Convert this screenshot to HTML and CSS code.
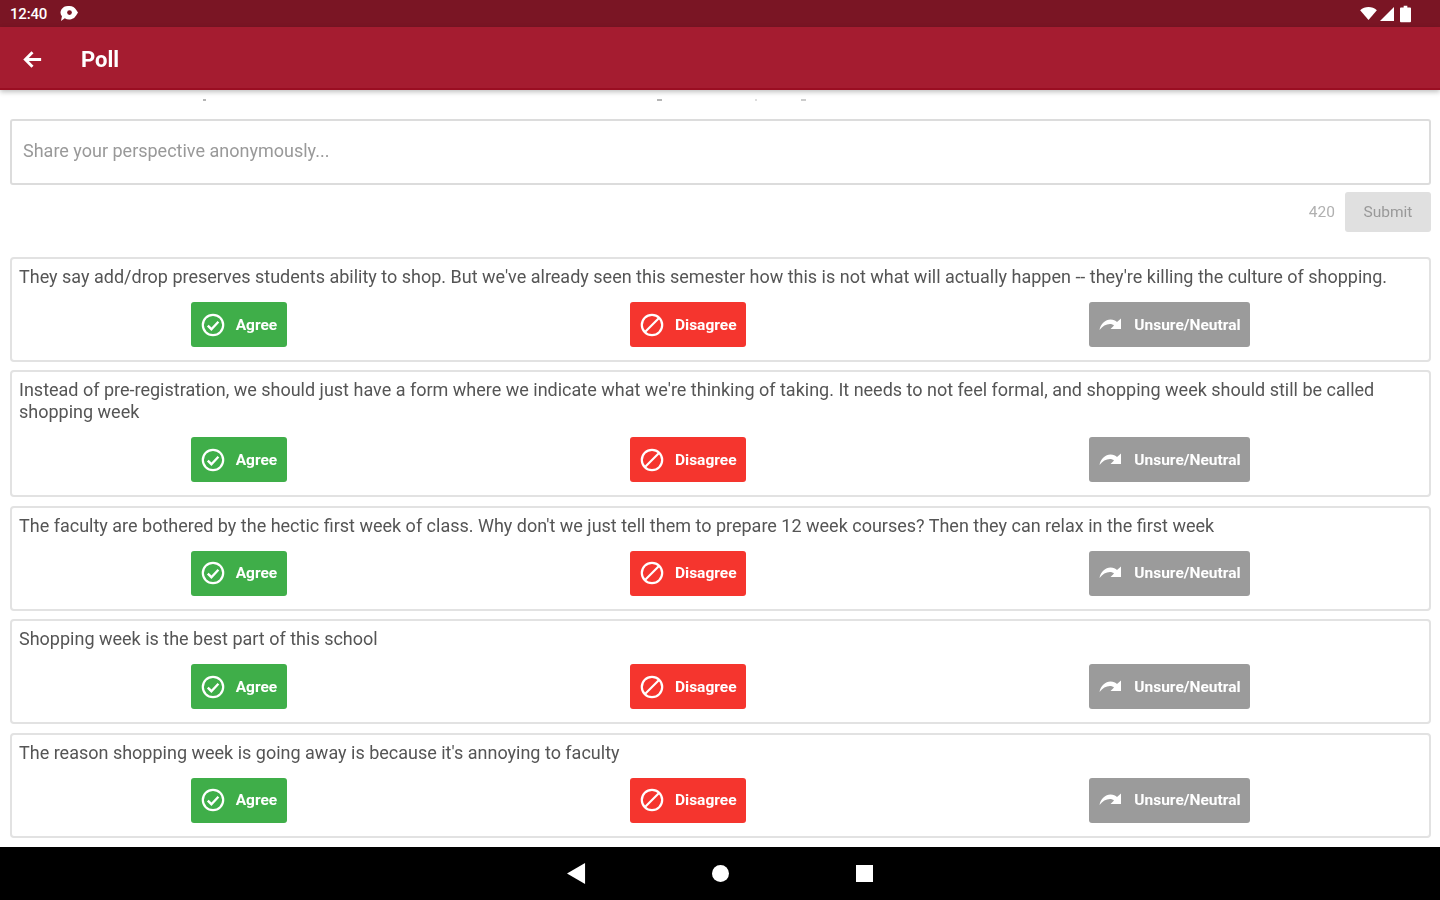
FILE: index.html
```html
<!DOCTYPE html>
<html lang="en">
<head>
  <meta charset="UTF-8">
  <meta name="viewport" content="width=device-width, initial-scale=1.0">
  <title>Poll</title>
  <link rel="stylesheet" href="styles.css">
</head>
<body>

  <svg class="icon-defs" width="0" height="0">
    <symbol id="i-agree" viewBox="0 0 24 24">
      <circle cx="12" cy="12" r="10.2" fill="none" stroke="currentColor" stroke-width="2.2"/>
      <path d="M6.8 12.6l3.6 3.6 7-7.4" fill="none" stroke="currentColor" stroke-width="2.4"/>
    </symbol>
    <symbol id="i-disagree" viewBox="0 0 24 24">
      <circle cx="12" cy="12" r="10.2" fill="none" stroke="currentColor" stroke-width="2.2"/>
      <path d="M5 19L19 5" fill="none" stroke="currentColor" stroke-width="2.2"/>
    </symbol>
    <symbol id="i-unsure" viewBox="0 0 24 24">
      <path d="M.5 17c1-6 6-10.500 11-10.500 3 0 5 1 6.500 2.500l4-3.500v10.500H11.500l3.500-3.500c-1-1-2.500-1.500-4-1.500-4 0-7.500 2-10.500 6z" fill="currentColor"/>
    </symbol>
  </svg>

  <div class="screen">
    <div class="status-bar">
      <div class="status-left">
        <span class="clock">12:40</span>
        <svg class="status-chat" viewBox="0 0 20 18"><path d="M9 1a8 7 0 0 1 8 4l2 3-2 3a8 7 0 0 1-12 3l-4 3 1-5a8 7 0 0 1 7-11z" fill="#fff"/><circle cx="10" cy="8" r="2.500" fill="#7a1524"/></svg>
      </div>
      <div class="status-right">
        <svg class="status-wifi" viewBox="0 0 18 14"><path d="M0 3.500C5-1 13-1 18 3.500L9 14z" fill="#fff"/></svg>
        <svg class="status-signal" viewBox="0 0 14 14"><path d="M14 0v14H0z" fill="#fff"/></svg>
        <svg class="status-battery" viewBox="0 0 12 18"><path d="M4 0h4v2h3a1 1 0 0 1 1 1v14a1 1 0 0 1-1 1H1a1 1 0 0 1-1-1V3a1 1 0 0 1 1-1h3z" fill="#fff"/></svg>
      </div>
    </div>

    <div class="app-bar">
      <svg class="back-arrow" viewBox="0 0 24 24"><path d="M21 12H5M12 4.500L4.500 12l7.500 7.500" fill="none" stroke="#fff" stroke-width="3"/></svg>
      <span class="app-title">Poll</span>
    </div>

    <div class="content">
      <div class="clipped-line">
        <span class="speck speck-1"></span>
        <span class="speck speck-2"></span>
        <span class="speck speck-3"></span>
        <span class="speck speck-4"></span>
      </div>

      <div class="share-box">Share your perspective anonymously...</div>

      <div class="submit-row">
        <span class="counter">420</span>
        <button class="submit-btn">Submit</button>
      </div>

      <div class="card">
        <p>They say add/drop preserves students ability to shop. But we've already seen this semester how this is not what will actually happen -- they're killing the culture of shopping.</p>
        <div class="actions">
          <button class="vote agree"><svg class="vote-icon"><use href="#i-agree"/></svg>Agree</button>
          <button class="vote disagree"><svg class="vote-icon"><use href="#i-disagree"/></svg>Disagree</button>
          <button class="vote unsure"><svg class="vote-icon"><use href="#i-unsure"/></svg>Unsure/Neutral</button>
        </div>
      </div>

      <div class="card">
        <p>Instead of pre-registration, we should just have a form where we indicate what we're thinking of taking. It needs to not feel formal, and shopping week should still be called shopping week</p>
        <div class="actions">
          <button class="vote agree"><svg class="vote-icon"><use href="#i-agree"/></svg>Agree</button>
          <button class="vote disagree"><svg class="vote-icon"><use href="#i-disagree"/></svg>Disagree</button>
          <button class="vote unsure"><svg class="vote-icon"><use href="#i-unsure"/></svg>Unsure/Neutral</button>
        </div>
      </div>

      <div class="card">
        <p>The faculty are bothered by the hectic first week of class. Why don't we just tell them to prepare 12 week courses? Then they can relax in the first week</p>
        <div class="actions">
          <button class="vote agree"><svg class="vote-icon"><use href="#i-agree"/></svg>Agree</button>
          <button class="vote disagree"><svg class="vote-icon"><use href="#i-disagree"/></svg>Disagree</button>
          <button class="vote unsure"><svg class="vote-icon"><use href="#i-unsure"/></svg>Unsure/Neutral</button>
        </div>
      </div>

      <div class="card">
        <p>Shopping week is the best part of this school</p>
        <div class="actions">
          <button class="vote agree"><svg class="vote-icon"><use href="#i-agree"/></svg>Agree</button>
          <button class="vote disagree"><svg class="vote-icon"><use href="#i-disagree"/></svg>Disagree</button>
          <button class="vote unsure"><svg class="vote-icon"><use href="#i-unsure"/></svg>Unsure/Neutral</button>
        </div>
      </div>

      <div class="card">
        <p>The reason shopping week is going away is because it's annoying to faculty</p>
        <div class="actions">
          <button class="vote agree"><svg class="vote-icon"><use href="#i-agree"/></svg>Agree</button>
          <button class="vote disagree"><svg class="vote-icon"><use href="#i-disagree"/></svg>Disagree</button>
          <button class="vote unsure"><svg class="vote-icon"><use href="#i-unsure"/></svg>Unsure/Neutral</button>
        </div>
      </div>
    </div>

    <div class="nav-bar">
      <svg class="nav-back" viewBox="0 0 20 22"><path d="M19 0v22L0 11z" fill="#fff"/></svg>
      <span class="nav-home"></span>
      <span class="nav-recent"></span>
    </div>
  </div>

</body>
</html>
```

FILE: styles.css
```css
html, body {
  margin: 0;
  padding: 0;
  background-color: #fff;
}
body {
  font-family: Roboto, "Liberation Sans", sans-serif;
  overflow: hidden;
}
.icon-defs {
  display: block;
  position: absolute;
}
.screen {
  width: 1440px;
  height: 900px;
  display: flex;
  flex-direction: column;
  filter: blur(0.7px);
}

/* status bar */
.status-bar {
  height: 27px;
  flex: none;
  background-color: #7a1524;
  color: white;
  display: flex;
  align-items: center;
  justify-content: space-between;
  padding: 0 29px 0 10px;
}
.status-left, .status-right {
  display: flex;
  align-items: center;
}
.clock {
  font-size: 15px;
  font-weight: 500;
  letter-spacing: -0.2px;
}
.status-chat {
  width: 19px;
  height: 17px;
  margin-left: 13px;
}
.status-wifi {
  width: 17px;
  height: 13px;
}
.status-signal {
  width: 14px;
  height: 14px;
  margin-left: 3px;
}
.status-battery {
  width: 11px;
  height: 18px;
  margin-left: 6px;
}

/* app bar */
.app-bar {
  height: 63px;
  flex: none;
  box-sizing: border-box;
  background-color: #a51c30;
  border-bottom: 2px solid #9a0e22;
  box-shadow: 0 2px 5px rgba(0, 0, 0, 0.25);
  display: flex;
  align-items: center;
  padding: 4px 0 0 21px;
  color: white;
  position: relative;
  z-index: 1;
}
.back-arrow {
  width: 23px;
  height: 23px;
}
.app-title {
  font-size: 22px;
  font-weight: 700;
  margin-left: 37px;
}

/* content */
.content {
  flex: 1;
  padding: 0 9px 0 10px;
  overflow: hidden;
}
.clipped-line {
  height: 29px;
  display: flex;
}
.speck {
  width: 5px;
  height: 2px;
  margin-top: 9px;
  background-color: #b5b5b5;
}
.speck-1 {
  width: 3px;
  margin-left: 193px;
}
.speck-2 {
  margin-left: 451px;
}
.speck-3 {
  width: 2px;
  margin-left: 93px;
  background-color: #ddd;
}
.speck-4 {
  margin-left: 44px;
  background-color: #ccc;
}
.share-box {
  height: 66px;
  box-sizing: border-box;
  border: 2px solid #dcdcdc;
  border-radius: 3px;
  padding: 0 11px 4px;
  display: flex;
  align-items: center;
  font-size: 18px;
  color: #999;
}
.submit-row {
  display: flex;
  justify-content: flex-end;
  align-items: center;
  margin: 7px 0 25px;
}
.counter {
  font-size: 15.500px;
  color: #b0b0b0;
  margin-right: 10px;
}
.submit-btn {
  width: 86px;
  height: 40px;
  border: none;
  border-radius: 3px;
  background-color: #e0e0e0;
  color: #999;
  font-family: inherit;
  font-size: 15.500px;
}

/* poll cards */
.card {
  box-sizing: border-box;
  border: 2px solid #e2e2e2;
  border-radius: 4px;
  padding: 7px 7px 13px;
  margin-bottom: 8.400px;
}
.card p {
  margin: 0;
  font-size: 18px;
  line-height: 22px;
  color: #555;
}
.actions {
  display: flex;
  justify-content: space-around;
  margin-top: 14px;
}
.vote {
  height: 45px;
  border: none;
  border-radius: 3px;
  padding: 0 10px;
  display: flex;
  align-items: center;
  font-family: inherit;
  font-size: 15.500px;
  font-weight: 700;
  white-space: nowrap;
  color: white;
}
.vote-icon {
  width: 24px;
  height: 24px;
  margin-right: 11px;
  flex: none;
}
.agree {
  width: 96px;
  background-color: #3fae49;
}
.disagree {
  width: 116px;
  background-color: #f5352e;
}
.unsure {
  width: 161px;
  background-color: #9b9b9b;
}

/* android nav */
.nav-bar {
  height: 53px;
  flex: none;
  background-color: #000;
  display: flex;
  align-items: center;
  justify-content: center;
}
.nav-back {
  width: 19px;
  height: 21px;
}
.nav-home {
  width: 17px;
  height: 17px;
  border-radius: 50%;
  background-color: #fff;
  margin-left: 126px;
}
.nav-recent {
  width: 17px;
  height: 17px;
  background-color: #fff;
  margin-left: 127px;
}
```
